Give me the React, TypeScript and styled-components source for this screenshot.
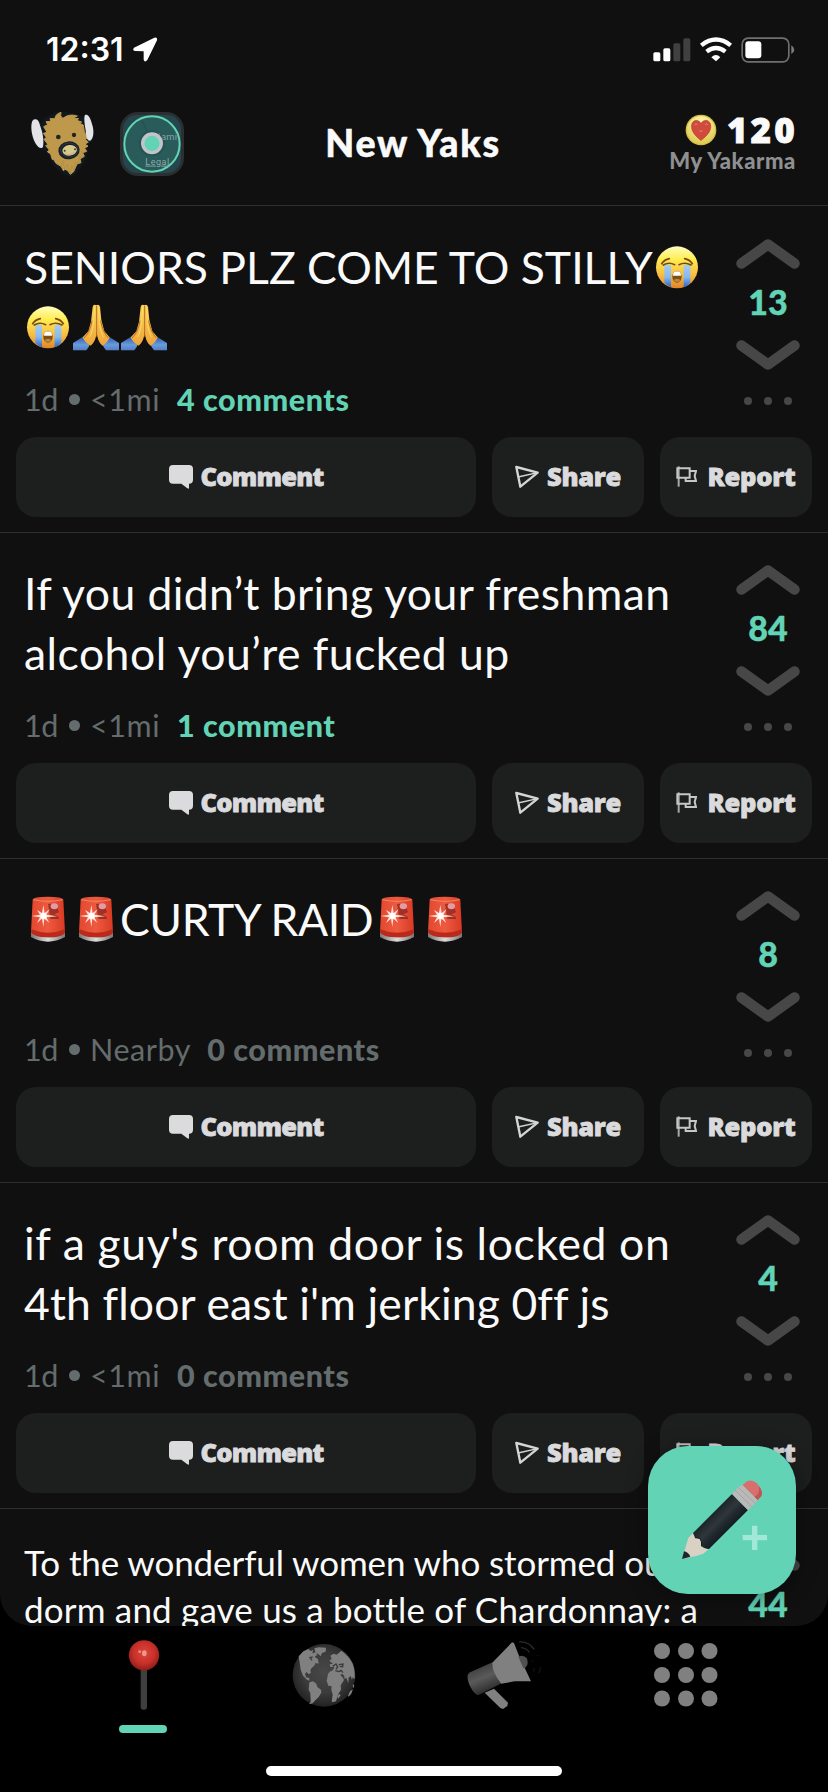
import React from "react";
import styled, { createGlobalStyle } from "styled-components";

const GlobalStyle = createGlobalStyle`
  * { box-sizing: border-box; }
  html, body { margin: 0; padding: 0; background: #000; }
  body { width: 828px; height: 1792px; overflow: hidden; font-family: Lato, "Noto Sans", sans-serif; }
`;

const Screen = styled.div`
  position: relative;
  display: flex;
  flex-direction: column;
  width: 828px;
  height: 1792px;
  background: #000;
  color: #fafafa;
  overflow: hidden;
`;

const Content = styled.main`
  display: flex;
  flex-direction: column;
  height: 1626px;
  flex: none;
  overflow: hidden;
  background: #101010;
  border-radius: 0 0 32px 32px;
`;

const StatusBar = styled.div`
  display: flex;
  align-items: center;
  height: 98px;
  flex: none;
  padding: 2px 33px 0 46px;
  gap: 8px;
`;

const Clock = styled.span`
  font: 600 32px/40px Inter, sans-serif;
  color: #fff;
`;

const StatusIcons = styled.div`
  display: flex;
  align-items: center;
  margin-left: auto;
`;

const Header = styled.header`
  display: grid;
  grid-template-columns: 1fr auto 1fr;
  align-items: center;
  height: 108px;
  flex: none;
  margin-bottom: 1px;
  padding: 0 32px 17px 28px;
  border-bottom: 1px solid #2f2f2f;
`;

const HeaderIcons = styled.div`
  display: flex;
  align-items: center;
  gap: 24px;
  padding-top: 2px;
`;

const Text = styled.span<{ $size: number; $weight?: number; $color?: string; $ls?: number; $lh?: number }>`
  display: inline-block;
  white-space: pre;
  font-size: ${(p) => p.$size}px;
  font-weight: ${(p) => p.$weight ?? 400};
  line-height: ${(p) => p.$lh ?? 36}px;
  color: ${(p) => p.$color ?? "#fafafa"};
  letter-spacing: ${(p) => p.$ls ?? 0}px;
  font-variant-ligatures: none;
`;

const PageTitle = styled(Text)`
  margin-right: -2px;
  -webkit-text-stroke: 0.5px #fafafa;
`;

const HeavyText = styled(Text)`
  font-family: "Open Sans", Lato, sans-serif;
  font-weight: 800;
  -webkit-text-stroke: 0.8px currentColor;
`;

const Karma = styled.div`
  display: flex;
  flex-direction: column;
  align-items: flex-end;
  padding-top: 1px;
`;

const KarmaScore = styled.div`
  display: flex;
  align-items: center;
  gap: 10px;
  margin-right: -2px;
`;

const Post = styled.article`
  display: flex;
  flex-direction: column;
  height: 326px;
  flex: none;
  border-bottom: 1px solid #2f2f2f;
  &:nth-of-type(3) { height: 324px; }
`;

const PostTop = styled.div`
  display: flex;
  flex: 1;
`;

const PostBody = styled.div`
  display: flex;
  flex-direction: column;
  justify-content: space-between;
  width: 708px;
  flex: none;
  padding: 30px 0 20px 24px;
`;

const Title = styled.div`
  display: flex;
  flex-direction: column;
`;

const TitleLine = styled.div<{ $lh: number }>`
  display: flex;
  align-items: center;
  height: ${(p) => p.$lh}px;
`;

const Meta = styled.div`
  display: flex;
  align-items: center;
  height: 36px;
`;

const Bullet = styled.i`
  width: 11px;
  height: 11px;
  margin: 0 10px 0 11px;
  border-radius: 50%;
  background: #646c6d;
`;

const Votes = styled.div`
  display: flex;
  flex-direction: column;
  align-items: center;
  width: 120px;
  flex: none;
  padding-top: 32px;
  & > svg { display: block; flex: none; }
`;

const VoteCount = styled.div`
  height: 71px;
  padding-top: 15px;
  -webkit-text-stroke: 0.4px #63d3b5;
`;

const Dots = styled.div`
  display: flex;
  gap: 12px;
  margin-top: 27px;
  i { width: 8px; height: 8px; border-radius: 50%; background: #474747; }
`;

const Actions = styled.div`
  display: grid;
  grid-template-columns: 460px 152px 152px;
  gap: 16px;
  padding: 0 16px 15px;
`;

const ActionButton = styled.button<{ $gap: number }>`
  display: flex;
  align-items: center;
  justify-content: center;
  gap: ${(p) => p.$gap}px;
  height: 80px;
  padding: 0 0 2px;
  border: 0;
  border-radius: 20px;
  background: #1d1e1e;
  font-family: inherit;
  svg { flex: none; margin-top: 2px; }
`;

const Fab = styled.button`
  position: absolute;
  left: 648px;
  top: 1446px;
  width: 148px;
  height: 148px;
  padding: 0;
  border: 0;
  border-radius: 40px;
  background: #63d3b5;
  box-shadow: 0 4px 22px rgba(0, 0, 0, 0.4);
  svg { display: block; }
`;

const Nav = styled.nav`
  display: grid;
  grid-template-columns: repeat(4, 180px);
  padding: 14px 54px 0;
  height: 140px;
  flex: none;
`;

const Tab = styled.div<{ $top?: number; $shift?: number }>`
  display: flex;
  flex-direction: column;
  align-items: center;
  padding-top: ${(p) => p.$top ?? 0}px;
  padding-left: ${(p) => p.$shift ?? 0}px;
  svg { display: block; flex: none; }
`;

const ActiveMark = styled.i`
  width: 48px;
  height: 8px;
  margin: 15px 2px 0 0;
  border-radius: 4px;
  background: #63d3b5;
`;

const HomeBar = styled.div`
  width: 296px;
  height: 10px;
  align-self: center;
  border-radius: 5px;
  background: #fff;
`;

const Yak = () => (
  <svg width="68" height="68" viewBox="85 335 204 204">
    <path d="M97 362Q112 355 124 374Q133 356 153 350Q179 333 208 344Q234 344 249 358Q259 334 275 360Q288 399 279 426Q274 435 265 438Q266 479 249 498Q230 532 209 536Q183 525 162 501Q148 475 137 456Q118 461 103 435Q86 395 97 362Z" fill="#101820" />
    <path d="M106 363C114 361 119 371 122 384C128 400 134 426 130 445C126 454 114 447 107 434C95 413 92 381 98 368Q101 363 106 363Z" fill="#e4e4e7" />
    <path d="M132 385L144 379L139 370L154 369L151 361L166 361Q166 348 184 342Q179 354 190 360Q208 345 233 353L220 360L237 361L231 366L246 371L240 375L251 380L254 400L263 419L257 424L266 431L256 438L265 443L255 450L261 459L249 463L254 474L241 482L244 493L232 497L222 520L212 528L203 516L194 512L192 518L184 504L169 495L161 482L158 484L153 467L143 460L149 455L138 442L145 439L133 423L140 417L131 405L142 402Z" fill="#be994b" stroke="#be994b" strokeWidth="3" strokeLinejoin="round" />
    <path d="M256 350C266 344 274 363 279 384C284 405 280 423 272 427C261 429 259 411 258 395C255 379 252 356 256 350Z" fill="#e4e4e7" />
    <path d="M184 504L190 486L194 512L203 497L212 528L216 502L224 516L226 491L237 495L239 472L247 480L247 455" fill="none" stroke="#9d7832" strokeWidth="2" opacity=".4" />
    <circle cx="176" cy="416" r="7" fill="#202323" />
    <circle cx="223" cy="410" r="6.500" fill="#202323" />
    <ellipse cx="208" cy="456" rx="32" ry="27" fill="#17202a" transform="rotate(-6 208 456)" />
    <ellipse cx="209" cy="455" rx="26" ry="21" fill="none" stroke="#343936" strokeWidth="3" />
    <ellipse cx="210" cy="456" rx="22" ry="16" fill="#d9c88d" transform="rotate(-8 210 456)" />
    <circle cx="195" cy="457" r="3" fill="#403b2e" />
    <circle cx="226" cy="453" r="3" fill="#403b2e" />
    <path d="M196 464Q210 475 224 461" fill="none" stroke="#baa86f" strokeWidth="2" />
  </svg>
);

const MapIcon = () => (
  <svg width="64" height="64" viewBox="360 336 192 192">
    <rect x="360" y="336" width="192" height="192" rx="54" fill="#2c2e2f" />
    <rect x="369" y="345" width="174" height="174" rx="43" fill="#24474e" />
    <circle cx="456" cy="432" r="83" fill="#295b5b" stroke="#63d3b5" strokeWidth="6" />
    <path d="M426 361L440 392" stroke="#234c50" strokeWidth="3" />
    <text x="475" y="421" fontFamily="Roboto, sans-serif" fontSize="28" letterSpacing="1" fill="#8aa5a6">lami'</text>
    <text x="436" y="494" fontFamily="Roboto, sans-serif" fontSize="27" letterSpacing="1.500" fill="#8fa9aa" textDecoration="underline">Legal</text>
    <circle cx="456" cy="430" r="39" fill="#1c4444" opacity=".35" />
    <circle cx="456" cy="430" r="28" fill="#63d3b5" stroke="#c3c4ca" strokeWidth="10" />
  </svg>
);

const Coin = () => (
  <svg width="32" height="32" viewBox="808 347 98 98">
    <defs>
      <radialGradient id="coin" cx=".5" cy=".25" r=".8"><stop offset="0" stopColor="#fff7b0" /><stop offset="1" stopColor="#dcc84a" /></radialGradient>
    </defs>
    <circle cx="857" cy="396" r="47" fill="#d3be45" />
    <circle cx="857" cy="396" r="43" fill="url(#coin)" />
    <path d="M857 428C846 419 828 405 828 385C828 363 850 362 857 376C864 362 887 363 887 385C887 405 868 419 857 428Z" fill="#d04b3c" stroke="#b9402f" strokeWidth="2" />
    <path d="M838 380Q842 375 846 379M870 379Q874 375 878 380M852 398Q857 403 862 398" fill="none" stroke="#ec8576" strokeWidth="3" />
  </svg>
);

const LocationArrow = () => (
  <svg width="26" height="26" viewBox="396 112 78 78">
    <path d="M402 144L463 114Q473 111 471 122L442 181Q434 190 431 180L431 155L405 154Q396 152 402 144Z" fill="#fff" />
  </svg>
);

const Signal = () => (
  <svg width="142" height="26" viewBox="716 110 426 78">
    <rect x="717" y="156" width="21" height="27" rx="5" fill="#fff" />
    <rect x="747" y="144" width="21" height="39" rx="5" fill="#fff" />
    <rect x="777" y="129" width="21" height="54" rx="5" fill="#404040" />
    <rect x="807" y="114" width="21" height="69" rx="5" fill="#404040" />
    <path d="M861 135Q905 100 949 135" fill="none" stroke="#fff" strokeWidth="13" />
    <path d="M877 154Q905 132 933 154" fill="none" stroke="#fff" strokeWidth="13" />
    <path d="M891 171Q905 157 918 171L905 183Z" fill="#fff" />
    <rect x="983.500" y="113.500" width="140" height="71" rx="18" fill="none" stroke="#6f6f6f" strokeWidth="5" />
    <rect x="993" y="123" width="48" height="51" rx="9" fill="#fff" />
    <path d="M1131 135Q1140 141 1140 148Q1140 156 1131 161Z" fill="#7a7a7a" />
  </svg>
);

const CryEmoji = () => (
  <svg width="48" height="48" viewBox="72 281 144 144">
    <defs>
      <linearGradient id="face" x2="0" y2="1"><stop offset="0" stopColor="#fffdc0" /><stop offset=".3" stopColor="#ffee52" /><stop offset=".7" stopColor="#f8b940" /><stop offset="1" stopColor="#e08428" /></linearGradient>
      <linearGradient id="tear" x2="0" y2="1"><stop offset="0" stopColor="#a3cdf3" /><stop offset=".55" stopColor="#86b9ee" /><stop offset="1" stopColor="#2564c8" /></linearGradient>
    </defs>
    <circle cx="144" cy="354" r="63" fill="url(#face)" />
    <path d="M106 347H126V414Q113 408 106 401ZM164 347H184V400Q175 410 164 414Z" fill="url(#tear)" />
    <path d="M103 347Q119 337 137 346M150 346Q168 337 186 347M98 343Q106 331 121 328M167 328Q182 331 190 343" fill="none" stroke="#7b4912" strokeWidth="5" strokeLinecap="round" />
    <ellipse cx="144" cy="382" rx="14" ry="18" fill="#805013" />
    <path d="M132 379Q131 366 144 366Q157 366 156 379Z" fill="#fff" />
    <ellipse cx="144" cy="393" rx="9" ry="5" fill="#b78b43" />
  </svg>
);

const PrayEmoji = () => (
  <svg width="48" height="48" viewBox="216 281 144 144">
    <defs>
      <linearGradient id="hand" x2="0" y2="1"><stop offset="0" stopColor="#fbd354" /><stop offset="1" stopColor="#efa63a" /></linearGradient>
      <linearGradient id="cuff" x2="0" y2="1"><stop offset="0" stopColor="#315ba5" /><stop offset=".6" stopColor="#699bdd" /><stop offset="1" stopColor="#527fc4" /></linearGradient>
    </defs>
    <path d="M219 401L249 382L271 401Q266 417 259 423H219ZM357 401L327 382L306 401Q311 417 318 423H357Z" fill="url(#cuff)" />
    <path d="M290 288Q280 282 278 293L273 337L265 366L248 384Q255 400 272 409Q288 397 290 368Q292 397 307 409Q322 402 329 384L313 366L304 331L300 292Q296 283 290 288Z" fill="url(#hand)" />
    <path d="M290 290V382M276 334Q270 370 252 386M302 334Q309 370 325 386" stroke="#bd6d20" strokeWidth="3" fill="none" />
    <path d="M284 295L281 340Q277 368 269 384M296 295L298 340Q302 368 310 384" stroke="#fff08a" strokeWidth="3" fill="none" opacity=".55" />
  </svg>
);

const SirenEmoji = () => (
  <svg width="48" height="48" viewBox="72 108 144 144">
    <defs>
      <linearGradient id="dome"><stop offset="0" stopColor="#e2482f" /><stop offset=".5" stopColor="#ed5a3f" /><stop offset="1" stopColor="#d83a25" /></linearGradient>
      <linearGradient id="base"><stop offset="0" stopColor="#777" /><stop offset=".5" stopColor="#ddd" /><stop offset="1" stopColor="#777" /></linearGradient>
    </defs>
    <path d="M93 218H195V234Q169 248 144 248Q118 248 93 234Z" fill="url(#base)" />
    <path d="M98 122Q99 113 144 113Q188 113 190 122L195 220Q187 235 144 235Q101 235 93 220Z" fill="url(#dome)" />
    <path d="M94 211Q143 232 195 211V221Q187 235 144 235Q101 235 93 220Z" fill="#b92a1a" />
    <path d="M144 135Q170 131 177 160L163 166Q180 174 177 180L151 180Z" fill="#8f2920" opacity=".8" />
    <ellipse cx="163" cy="142" rx="11" ry="9" fill="#e39ba6" />
    <path d="M100 122Q144 132 188 122" fill="none" stroke="#ef8b62" strokeWidth="3" />
    <path d="M130 138L134 162L149 151L139 167L172 172L139 175L148 191L133 179L130 204L126 179L111 192L120 175L95 171L120 167L111 153L126 162Z" fill="#ffe1d8" />
    <circle cx="131" cy="171" r="9" fill="#fff" />
  </svg>
);

const Chevron = ({ down }: { down?: boolean }) => (
  <svg width="64" height="30" viewBox="0 0 64 30">
    <path d={down ? "M5.500 5.500L32 24.500L58.500 5.500" : "M5.500 24.500L32 5.500L58.500 24.500"} fill="none" stroke="#474747" strokeWidth="10.500" strokeLinecap="round" strokeLinejoin="round" />
  </svg>
);

const CommentIcon = () => (
  <svg width="24" height="24" viewBox="507 765 72 72">
    <path d="M519 765H567Q579 765 579 777V809Q579 821 567 821V834Q567 838 562 835L544 821H519Q507 821 507 809V777Q507 765 519 765Z" fill="#dbdbdd" />
  </svg>
);

const ShareIcon = () => (
  <svg width="24" height="24" viewBox="303 765 72 72">
    <path d="M307 771L371 788L319 830Z" fill="none" stroke="#d5d5d7" strokeWidth="7" strokeLinejoin="round" />
    <path d="M312 801L371 788" fill="none" stroke="#d5d5d7" strokeWidth="4" />
  </svg>
);

const FlagIcon = () => (
  <svg width="21" height="24" viewBox="791 765 63 72">
    <path d="M799 769V830" stroke="#a9a9ab" strokeWidth="6" />
    <path d="M795 775H832V803H795ZM832 783H851L847 798L851 813H820V803" fill="none" stroke="#c6c6c8" strokeWidth="6" />
  </svg>
);

const Pencil = () => (
  <svg width="148" height="148" viewBox="264 198 444 444">
    <defs>
      <linearGradient id="barrel" gradientUnits="userSpaceOnUse" x1="455" y1="395" x2="510" y2="450"><stop offset="0" stopColor="#172126" /><stop offset=".45" stopColor="#30373a" /><stop offset=".65" stopColor="#202a2f" /><stop offset="1" stopColor="#111a1f" /></linearGradient>
    </defs>
    <path d="M399 459L385 474L366 537L411 527L430 521L447 506Z" fill="#d9d1c3" />
    <path d="M372 514Q383 515 391 530L366 537Z" fill="#1c272d" />
    <path d="M516 342L564 390L447 507Q431 506 425 499Q426 484 420 475L405 473L399 459Z" fill="url(#barrel)" />
    <path d="M405 473L420 475Q426 484 425 499" fill="none" stroke="#0f171b" strokeWidth="3" />
    <path d="M536 320L548 314L593 360Q583 376 564 391L516 342Z" fill="#b8b9b8" />
    <path d="M525 330L577 382M534 322L587 371" stroke="#9b9c9c" strokeWidth="2" />
    <path d="M548 315L562 303Q574 298 589 308Q602 321 606 339L604 348L593 360Z" fill="#d66f6d" />
    <path d="M597 319Q610 336 604 348L593 360L584 350Q600 344 597 319Z" fill="#bf5555" />
    <path d="M576 437H592V465H621V481H592V510H576V481H548V465H576Z" fill="#a1e8d6" />
  </svg>
);

const PinIcon = () => (
  <svg width="40" height="70" viewBox="132 90 120 210">
    <defs><radialGradient id="ball" cx=".5" cy=".42" r=".58"><stop offset="0" stopColor="#d8473c" /><stop offset=".6" stopColor="#c9302a" /><stop offset="1" stopColor="#8e1d19" /></radialGradient></defs>
    <rect x="182" y="170" width="19" height="129" rx="7" fill="#3f3f3f" />
    <circle cx="192" cy="136" r="45.500" fill="url(#ball)" />
    <ellipse cx="193" cy="130" rx="7" ry="9" fill="#f3aaa5" opacity=".8" />
    <circle cx="179" cy="125" r="4" fill="#ec8f88" />
  </svg>
);

const GlobeIcon = () => (
  <svg width="64" height="64" viewBox="636 98 192 192">
    <defs><radialGradient id="globe" cx=".5" cy=".45" r=".55"><stop offset="0" stopColor="#484848" /><stop offset=".6" stopColor="#3b3b3b" /><stop offset="1" stopColor="#222" /></radialGradient></defs>
    <circle cx="732" cy="195" r="94" fill="url(#globe)" />
    <g fill="#808080">
      <path d="M656 138L670 123L685 116L692 122L700 119L697 129L706 126L712 133L704 139L714 147L716 160L706 158L703 166L694 174L691 181L693 187L686 192L680 185L675 191L678 201L688 203L688 211L681 208L669 196L662 178L659 157Z" />
      <path d="M703 114L716 111L738 112L737 124L726 128L722 138L714 130L707 129Z" />
      <path d="M688 216L699 213L709 220L712 230L723 238L724 247L716 260L706 270L698 279L687 282L692 274L691 248L686 238Z" />
      <path d="M748 151L755 145L751 136L761 130L770 133L784 121Q806 136 818 160Q826 181 824 207L818 201L816 209L812 197L806 202L805 219L799 203L793 205L793 197L786 190L781 194L789 202L792 209L782 225L783 238L775 251L768 273L758 276L755 273L758 253L754 238L755 228L745 226L740 211L744 191L749 184L759 180L763 170L751 170L749 162L759 160Z" />
      <path d="M772 259L777 251L782 254L775 265ZM818 222L823 225L820 235ZM804 256L810 243L819 236L814 250L806 259Z" />
    </g>
    <path d="M758 168L768 161L773 170L768 177M776 163L789 161L788 169L779 168M777 184L783 180L789 187M698 140L690 142L696 150M766 181L777 184" fill="none" stroke="#3b3b3b" strokeWidth="4" />
  </svg>
);

const MegaphoneIcon = () => (
  <svg width="76" height="70" viewBox="78 92 228 210">
    <defs>
      <linearGradient id="horn" x1=".2" x2=".6" y2="1"><stop offset="0" stopColor="#333" /><stop offset=".5" stopColor="#5a5a5a" /><stop offset="1" stopColor="#222" /></linearGradient>
    </defs>
    <path d="M131 250L159 238L201 280L199 290L186 299L178 296Z" fill="#808080" />
    <path d="M84 190L156 158Q151 184 179 223L111 258Q99 255 87 230Q78 212 80 197Z" fill="url(#horn)" />
    <path d="M156 158L213 99L219 101L233 137L270 216H221L180 223Q153 190 154 161Z" fill="#808080" />
    <path d="M232 142Q247 134 257 147Q265 164 252 176L247 177Z" fill="#505050" />
    <path d="M235 98Q263 96 279 120M240 115Q256 116 265 129" fill="none" stroke="#2b2b2b" strokeWidth="4" />
    <path d="M289 137L291 141M275 153V157M298 174Q299 184 292 191M280 176L278 187" stroke="#1a1a1a" strokeWidth="3" fill="none" />
  </svg>
);

const GridIcon = () => (
  <svg width="64" height="64" viewBox="0 0 64 64">
    {[8, 32, 55.5].map((y) => [8, 32, 55.5].map((x) => <circle key={`${x}-${y}`} cx={x} cy={y} r="8" fill="#808080" />))}
  </svg>
);

const emojis = { cry: CryEmoji, pray: PrayEmoji, siren: SirenEmoji };
type Piece = keyof typeof emojis | { text: string; ls?: number };
interface PostData {
  lines: Piece[][];
  place?: string;
  comments?: string;
  votes: string;
  size?: number;
  lh?: number;
  active?: boolean;
}

const posts: PostData[] = [
  { lines: [[{ text: "SENIORS PLZ COME TO STILLY" }, "cry"], ["cry", "pray", "pray"]], place: "<1mi", comments: "4 comments", votes: "13", active: true },
  { lines: [[{ text: "If you didn’t bring your freshman", ls: 0.4 }], [{ text: "alcohol you’re fucked up", ls: 0.48 }]], place: "<1mi", comments: "1 comment", votes: "84", active: true },
  { lines: [["siren", "siren", { text: "CURTY RAID", ls: -0.4 }, "siren", "siren"]], place: "Nearby", comments: "0 comments", votes: "8" },
  { lines: [[{ text: "if a guy's room door is locked on", ls: 0.62 }], [{ text: "4th floor east i'm jerking 0ff js", ls: 0.12 }]], place: "<1mi", comments: "0 comments", votes: "4" },
  { lines: [[{ text: "To the wonderful women who stormed our", ls: -0.1 }], [{ text: "dorm and gave us a bottle of Chardonnay: a", ls: 0.18 }]], votes: "44", size: 35, lh: 47 },
];

const GREY = "#646c6d";
const MINT = "#63d3b5";

const PostCard = ({ post }: { post: PostData }) => {
  const { size = 44.5, lh = 60 } = post;
  return (
    <Post>
      <PostTop>
        <PostBody>
          <Title>
            {post.lines.map((line, i) => (
              <TitleLine key={i} $lh={lh}>
                {line.map((piece, j) => {
                  if (typeof piece === "string") {
                    const Emoji = emojis[piece];
                    return <Emoji key={j} />;
                  }
                  return <Text key={j} $size={size} $lh={lh} $ls={piece.ls}>{piece.text}</Text>;
                })}
              </TitleLine>
            ))}
          </Title>
          {post.place && (
            <Meta>
              <Text $size={30.5} $color={GREY} $ls={-0.4}>1d</Text>
              <Bullet />
              <Text $size={30.5} $color={GREY} $ls={0.6}>{`${post.place}  `}</Text>
              <Text $size={30.5} $weight={900} $color={post.active ? MINT : GREY} $ls={0.55}>{post.comments}</Text>
            </Meta>
          )}
        </PostBody>
        <Votes>
          <Chevron />
          <VoteCount><Text $size={34} $weight={900} $color={MINT}>{post.votes}</Text></VoteCount>
          <Chevron down />
          <Dots><i /><i /><i /></Dots>
        </Votes>
      </PostTop>
      <Actions>
        <ActionButton $gap={8}><CommentIcon /><HeavyText $size={25.5} $ls={-0.8} $color="#dbdbdd">Comment</HeavyText></ActionButton>
        <ActionButton $gap={8}><ShareIcon /><HeavyText $size={25.5} $ls={-0.3} $color="#dbdbdd">Share</HeavyText></ActionButton>
        <ActionButton $gap={10}><FlagIcon /><HeavyText $size={25.5} $ls={-0.2} $color="#dbdbdd">Report</HeavyText></ActionButton>
      </Actions>
    </Post>
  );
};

export default function App() {
  return (
    <>
      <GlobalStyle />
      <Screen>
        <Content>
          <StatusBar>
            <Clock>12:31</Clock>
            <LocationArrow />
            <StatusIcons><Signal /></StatusIcons>
          </StatusBar>
          <Header>
            <HeaderIcons><Yak /><MapIcon /></HeaderIcons>
            <PageTitle $size={37.5} $weight={900} $ls={1.7}>New Yaks</PageTitle>
            <Karma>
              <KarmaScore><Coin /><HeavyText $size={35} $ls={3.2} $lh={34}>120</HeavyText></KarmaScore>
              <Text $size={22} $weight={900} $color="#8e9092" $lh={28} $ls={0.6}>My Yakarma</Text>
            </Karma>
          </Header>
          {posts.map((p, i) => <PostCard key={i} post={p} />)}
        </Content>
        <Nav>
          <Tab><PinIcon /><ActiveMark /></Tab>
          <Tab $top={3}><GlobeIcon /></Tab>
          <Tab $shift={2}><MegaphoneIcon /></Tab>
          <Tab $top={3} $shift={3}><GridIcon /></Tab>
        </Nav>
        <HomeBar />
        <Fab aria-label="New yak"><Pencil /></Fab>
      </Screen>
    </>
  );
}
